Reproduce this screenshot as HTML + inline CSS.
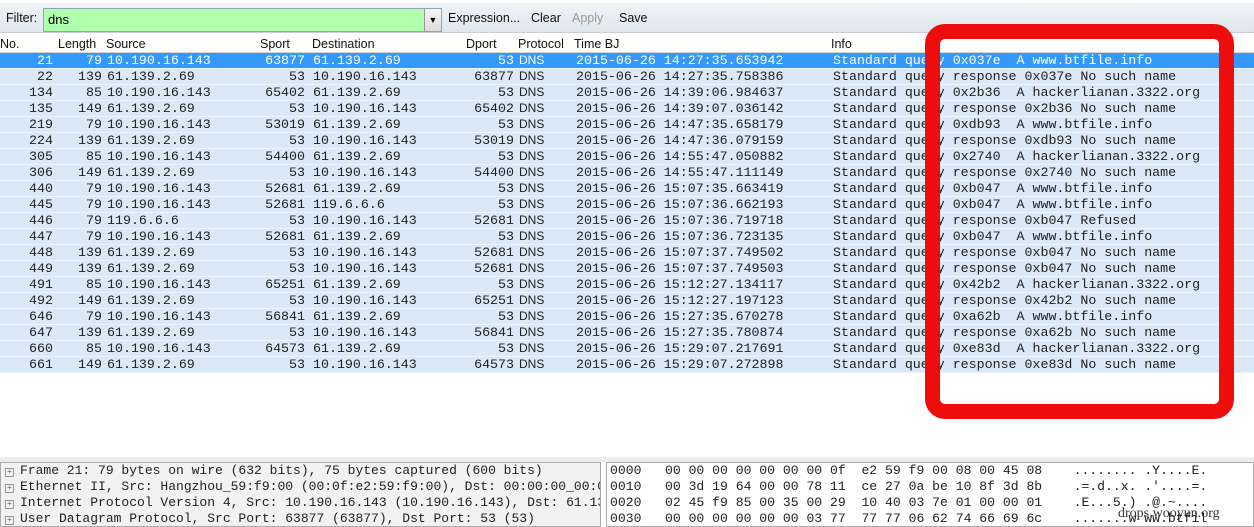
<!DOCTYPE html>
<html><head><meta charset="utf-8"><style>
*{margin:0;padding:0;box-sizing:border-box}
body{width:1254px;height:527px;overflow:hidden;background:#fff;position:relative;font-family:"Liberation Sans",sans-serif}
.bar{position:absolute;left:0;top:3px;width:1254px;height:30px;background:linear-gradient(#f1f4f8,#dfe6ee);border-bottom:1px solid #c8cfd8}
.bar span{position:absolute;top:8px;font-size:12.5px;color:#111}
.inp{position:absolute;left:43px;top:5px;width:399px;height:24px;background:#afffaf;border:1px solid #8aa;font-size:13px;padding:3px 4px}
.dd{position:absolute;left:424px;top:6px;width:17px;height:22px;background:linear-gradient(#f6f6f6,#dcdcdc);border-left:1px solid #999;font-size:9px;text-align:center;line-height:22px}
.hdr{position:absolute;left:0;top:36px;width:1254px;height:17px;background:#fff;border-bottom:1px solid #d5d5d5}
.hdr span{position:absolute;top:1px;font-size:12.5px;color:#111}
.row{position:absolute;left:0;width:1254px;height:16px;background:#dae8f7;border-bottom:1px solid #eef4fb;font-family:"Liberation Mono",monospace;font-size:13.3px;color:#222;line-height:15px}
.row.sel{background:#3399ff;color:#fff}
.row span{position:absolute;top:0;white-space:pre}
.a{right:1201px}.b{right:1152px}.c{left:107px}.d{right:949px}.e{left:313px}.f{right:740px}.g{left:519px;font-family:"Liberation Sans",sans-serif;font-size:12px}.h{left:576px}.i{left:833px}
.box{position:absolute;left:925px;top:24px;width:309px;height:395px;border:15px solid #ee0d0d;border-radius:20px}
.split{position:absolute;left:0;top:457px;width:1254px;height:5px;background:#ececec}
.pl{position:absolute;left:0;top:462px;width:601px;height:65px;border:1px solid #aaa;background:#fff;font-family:"Liberation Mono",monospace;font-size:13px;color:#222;overflow:hidden}
.pl div{height:16px;line-height:16px;white-space:pre;padding-left:4px;background:#f2f2f2}
.pl b{display:inline-block;width:9px;height:9px;border:1px solid #999;font-size:8px;line-height:7px;text-align:center;font-weight:normal;margin-right:6px;vertical-align:0;color:#666}
.pr{position:absolute;left:606px;top:462px;width:648px;height:65px;border:1px solid #aaa;background:#fff;font-family:"Liberation Mono",monospace;color:#222;overflow:hidden}
.pr div{height:16px;line-height:16px;white-space:pre;padding-left:3px;font-size:13.1px}
.wm{position:absolute;left:1118px;top:506px;font-family:"Liberation Serif",serif;font-size:14px;color:#333}
</style></head><body>
<div class="bar"><span style="left:6px">Filter:</span><div class="inp">dns</div><div class="dd">▼</div><span style="left:448px">Expression...</span><span style="left:531px">Clear</span><span style="left:572px;color:#999">Apply</span><span style="left:619px">Save</span></div>
<div class="hdr"><span style="left:0">No.</span><span style="left:58px">Length</span><span style="left:106px">Source</span><span style="left:260px">Sport</span><span style="left:312px">Destination</span><span style="left:466px">Dport</span><span style="left:518px">Protocol</span><span style="left:574px">Time BJ</span><span style="left:831px">Info</span></div>

<div class="row sel" style="top:53px"><span class="a">21</span><span class="b">79</span><span class="c">10.190.16.143</span><span class="d">63877</span><span class="e">61.139.2.69</span><span class="f">53</span><span class="g">DNS</span><span class="h">2015-06-26 14:27:35.653942</span><span class="i">Standard query 0x037e  A www.btfile.info</span></div>
<div class="row" style="top:69px"><span class="a">22</span><span class="b">139</span><span class="c">61.139.2.69</span><span class="d">53</span><span class="e">10.190.16.143</span><span class="f">63877</span><span class="g">DNS</span><span class="h">2015-06-26 14:27:35.758386</span><span class="i">Standard query response 0x037e No such name</span></div>
<div class="row" style="top:85px"><span class="a">134</span><span class="b">85</span><span class="c">10.190.16.143</span><span class="d">65402</span><span class="e">61.139.2.69</span><span class="f">53</span><span class="g">DNS</span><span class="h">2015-06-26 14:39:06.984637</span><span class="i">Standard query 0x2b36  A hackerlianan.3322.org</span></div>
<div class="row" style="top:101px"><span class="a">135</span><span class="b">149</span><span class="c">61.139.2.69</span><span class="d">53</span><span class="e">10.190.16.143</span><span class="f">65402</span><span class="g">DNS</span><span class="h">2015-06-26 14:39:07.036142</span><span class="i">Standard query response 0x2b36 No such name</span></div>
<div class="row" style="top:117px"><span class="a">219</span><span class="b">79</span><span class="c">10.190.16.143</span><span class="d">53019</span><span class="e">61.139.2.69</span><span class="f">53</span><span class="g">DNS</span><span class="h">2015-06-26 14:47:35.658179</span><span class="i">Standard query 0xdb93  A www.btfile.info</span></div>
<div class="row" style="top:133px"><span class="a">224</span><span class="b">139</span><span class="c">61.139.2.69</span><span class="d">53</span><span class="e">10.190.16.143</span><span class="f">53019</span><span class="g">DNS</span><span class="h">2015-06-26 14:47:36.079159</span><span class="i">Standard query response 0xdb93 No such name</span></div>
<div class="row" style="top:149px"><span class="a">305</span><span class="b">85</span><span class="c">10.190.16.143</span><span class="d">54400</span><span class="e">61.139.2.69</span><span class="f">53</span><span class="g">DNS</span><span class="h">2015-06-26 14:55:47.050882</span><span class="i">Standard query 0x2740  A hackerlianan.3322.org</span></div>
<div class="row" style="top:165px"><span class="a">306</span><span class="b">149</span><span class="c">61.139.2.69</span><span class="d">53</span><span class="e">10.190.16.143</span><span class="f">54400</span><span class="g">DNS</span><span class="h">2015-06-26 14:55:47.111149</span><span class="i">Standard query response 0x2740 No such name</span></div>
<div class="row" style="top:181px"><span class="a">440</span><span class="b">79</span><span class="c">10.190.16.143</span><span class="d">52681</span><span class="e">61.139.2.69</span><span class="f">53</span><span class="g">DNS</span><span class="h">2015-06-26 15:07:35.663419</span><span class="i">Standard query 0xb047  A www.btfile.info</span></div>
<div class="row" style="top:197px"><span class="a">445</span><span class="b">79</span><span class="c">10.190.16.143</span><span class="d">52681</span><span class="e">119.6.6.6</span><span class="f">53</span><span class="g">DNS</span><span class="h">2015-06-26 15:07:36.662193</span><span class="i">Standard query 0xb047  A www.btfile.info</span></div>
<div class="row" style="top:213px"><span class="a">446</span><span class="b">79</span><span class="c">119.6.6.6</span><span class="d">53</span><span class="e">10.190.16.143</span><span class="f">52681</span><span class="g">DNS</span><span class="h">2015-06-26 15:07:36.719718</span><span class="i">Standard query response 0xb047 Refused</span></div>
<div class="row" style="top:229px"><span class="a">447</span><span class="b">79</span><span class="c">10.190.16.143</span><span class="d">52681</span><span class="e">61.139.2.69</span><span class="f">53</span><span class="g">DNS</span><span class="h">2015-06-26 15:07:36.723135</span><span class="i">Standard query 0xb047  A www.btfile.info</span></div>
<div class="row" style="top:245px"><span class="a">448</span><span class="b">139</span><span class="c">61.139.2.69</span><span class="d">53</span><span class="e">10.190.16.143</span><span class="f">52681</span><span class="g">DNS</span><span class="h">2015-06-26 15:07:37.749502</span><span class="i">Standard query response 0xb047 No such name</span></div>
<div class="row" style="top:261px"><span class="a">449</span><span class="b">139</span><span class="c">61.139.2.69</span><span class="d">53</span><span class="e">10.190.16.143</span><span class="f">52681</span><span class="g">DNS</span><span class="h">2015-06-26 15:07:37.749503</span><span class="i">Standard query response 0xb047 No such name</span></div>
<div class="row" style="top:277px"><span class="a">491</span><span class="b">85</span><span class="c">10.190.16.143</span><span class="d">65251</span><span class="e">61.139.2.69</span><span class="f">53</span><span class="g">DNS</span><span class="h">2015-06-26 15:12:27.134117</span><span class="i">Standard query 0x42b2  A hackerlianan.3322.org</span></div>
<div class="row" style="top:293px"><span class="a">492</span><span class="b">149</span><span class="c">61.139.2.69</span><span class="d">53</span><span class="e">10.190.16.143</span><span class="f">65251</span><span class="g">DNS</span><span class="h">2015-06-26 15:12:27.197123</span><span class="i">Standard query response 0x42b2 No such name</span></div>
<div class="row" style="top:309px"><span class="a">646</span><span class="b">79</span><span class="c">10.190.16.143</span><span class="d">56841</span><span class="e">61.139.2.69</span><span class="f">53</span><span class="g">DNS</span><span class="h">2015-06-26 15:27:35.670278</span><span class="i">Standard query 0xa62b  A www.btfile.info</span></div>
<div class="row" style="top:325px"><span class="a">647</span><span class="b">139</span><span class="c">61.139.2.69</span><span class="d">53</span><span class="e">10.190.16.143</span><span class="f">56841</span><span class="g">DNS</span><span class="h">2015-06-26 15:27:35.780874</span><span class="i">Standard query response 0xa62b No such name</span></div>
<div class="row" style="top:341px"><span class="a">660</span><span class="b">85</span><span class="c">10.190.16.143</span><span class="d">64573</span><span class="e">61.139.2.69</span><span class="f">53</span><span class="g">DNS</span><span class="h">2015-06-26 15:29:07.217691</span><span class="i">Standard query 0xe83d  A hackerlianan.3322.org</span></div>
<div class="row" style="top:357px"><span class="a">661</span><span class="b">149</span><span class="c">61.139.2.69</span><span class="d">53</span><span class="e">10.190.16.143</span><span class="f">64573</span><span class="g">DNS</span><span class="h">2015-06-26 15:29:07.272898</span><span class="i">Standard query response 0xe83d No such name</span></div>

<div class="box"></div>
<div class="split"></div>
<div class="pl">
<div><b>+</b>Frame 21: 79 bytes on wire (632 bits), 75 bytes captured (600 bits)</div>
<div><b>+</b>Ethernet II, Src: Hangzhou_59:f9:00 (00:0f:e2:59:f9:00), Dst: 00:00:00_00:00:00</div>
<div><b>+</b>Internet Protocol Version 4, Src: 10.190.16.143 (10.190.16.143), Dst: 61.139.2.69</div>
<div><b>+</b>User Datagram Protocol, Src Port: 63877 (63877), Dst Port: 53 (53)</div>
</div>
<div class="pr">
<div>0000   00 00 00 00 00 00 00 0f  e2 59 f9 00 08 00 45 08    ........ .Y....E.</div>
<div>0010   00 3d 19 64 00 00 78 11  ce 27 0a be 10 8f 3d 8b    .=.d..x. .'....=.</div>
<div>0020   02 45 f9 85 00 35 00 29  10 40 03 7e 01 00 00 01    .E...5.) .@.~....</div>
<div>0030   00 00 00 00 00 00 03 77  77 77 06 62 74 66 69 6c    .......w ww.btfil</div>
<div>0040   65 04 69 6e 66 6f 00 00  01 00 01                  e.info</div>
</div>
<div class="wm">drops.wooyun.org</div>
</body></html>
